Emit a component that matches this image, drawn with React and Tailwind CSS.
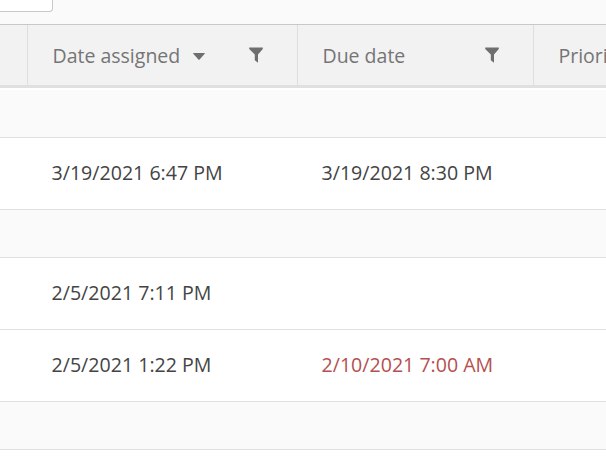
const rows = [
  { group: true, size: "h-[50px]" },
  { assigned: "3/19/2021 6:47 PM", due: "3/19/2021 8:30 PM" },
  { group: true, size: "h-12" },
  { assigned: "2/5/2021 7:11 PM", due: "" },
  { title: ".", assigned: "2/5/2021 1:22 PM", due: "2/10/2021 7:00 AM", overdue: true },
  { group: true, size: "h-12" },
];

function FilterIcon() {
  return (
    <svg width="14" height="16" viewBox="0 0 14 16" fill="#6e6e6e">
      <path d="M.2.5h13.6v1.6L9 7.6v8.2L5.8 13.2V7.6L.2 2.1z" />
    </svg>
  );
}

function SortIcon() {
  return (
    <svg width="12" height="7" viewBox="0 0 12 7" fill="#6e6e6e">
      <path d="M.5 0h11q.6 0 .2.7L6.6 6.4q-.6.6-1.2 0L.3.7Q-.1 0 .5 0z" />
    </svg>
  );
}

export default function App() {
  return (
    <div className="flex h-[461px] w-[606px] flex-col overflow-hidden bg-white font-['Open_Sans',sans-serif] text-[19.5px] leading-7 whitespace-nowrap">
      <div className="h-6 shrink-0 bg-[#fafafa]">
        <div className="h-3 w-[53px] rounded-br-[4px] border-r border-b border-[#c8c8c8] bg-white" />
      </div>

      <div className="flex h-16 shrink-0 border-t border-b-3 border-t-[#c8c8c8] border-b-[#e0e0e0] bg-[#f2f2f2] text-[#757575]">
        <div className="w-[27px] shrink-0" />
        <div className="flex w-[270px] shrink-0 items-center border-l border-[#dedede] pr-[34px] pl-[24.5px]">
          <span className="pt-0.5">Date assigned</span>
          <span className="ml-[12.5px] pt-0.5"><SortIcon /></span>
          <span className="ml-auto"><FilterIcon /></span>
        </div>
        <div className="flex w-[236px] shrink-0 items-center justify-between border-l border-[#dedede] pr-[34px] pl-[24.5px]">
          <span className="pt-0.5">Due date</span>
          <FilterIcon />
        </div>
        <div className="flex w-[73px] shrink-0 items-center overflow-hidden border-l border-[#dedede] pl-[24.5px]">
          <span className="pt-0.5">Priority</span>
        </div>
      </div>

      {rows.map((r, i) =>
        r.group ? (
          <div key={i} className={`${r.size} shrink-0 border-b border-[#e0e0e0] bg-[#fafafa] ${i === 0 ? "border-t-2 border-t-white" : ""}`} />
        ) : (
          <div key={i} className="flex h-18 shrink-0 items-center border-b border-[#e0e0e0] pb-0.5 text-[19.6px] text-[#444]">
            <div className="flex w-[27px] shrink-0">
              <span className="-ml-1 text-[#999]">{r.title}</span>
            </div>
            <div className="w-[270px] shrink-0 pl-[24.5px]">{r.assigned}</div>
            <div className={r.overdue ? "pl-[24.5px] text-[#b55050]" : "pl-[24.5px]"}>{r.due}</div>
          </div>
        )
      )}
    </div>
  );
}
